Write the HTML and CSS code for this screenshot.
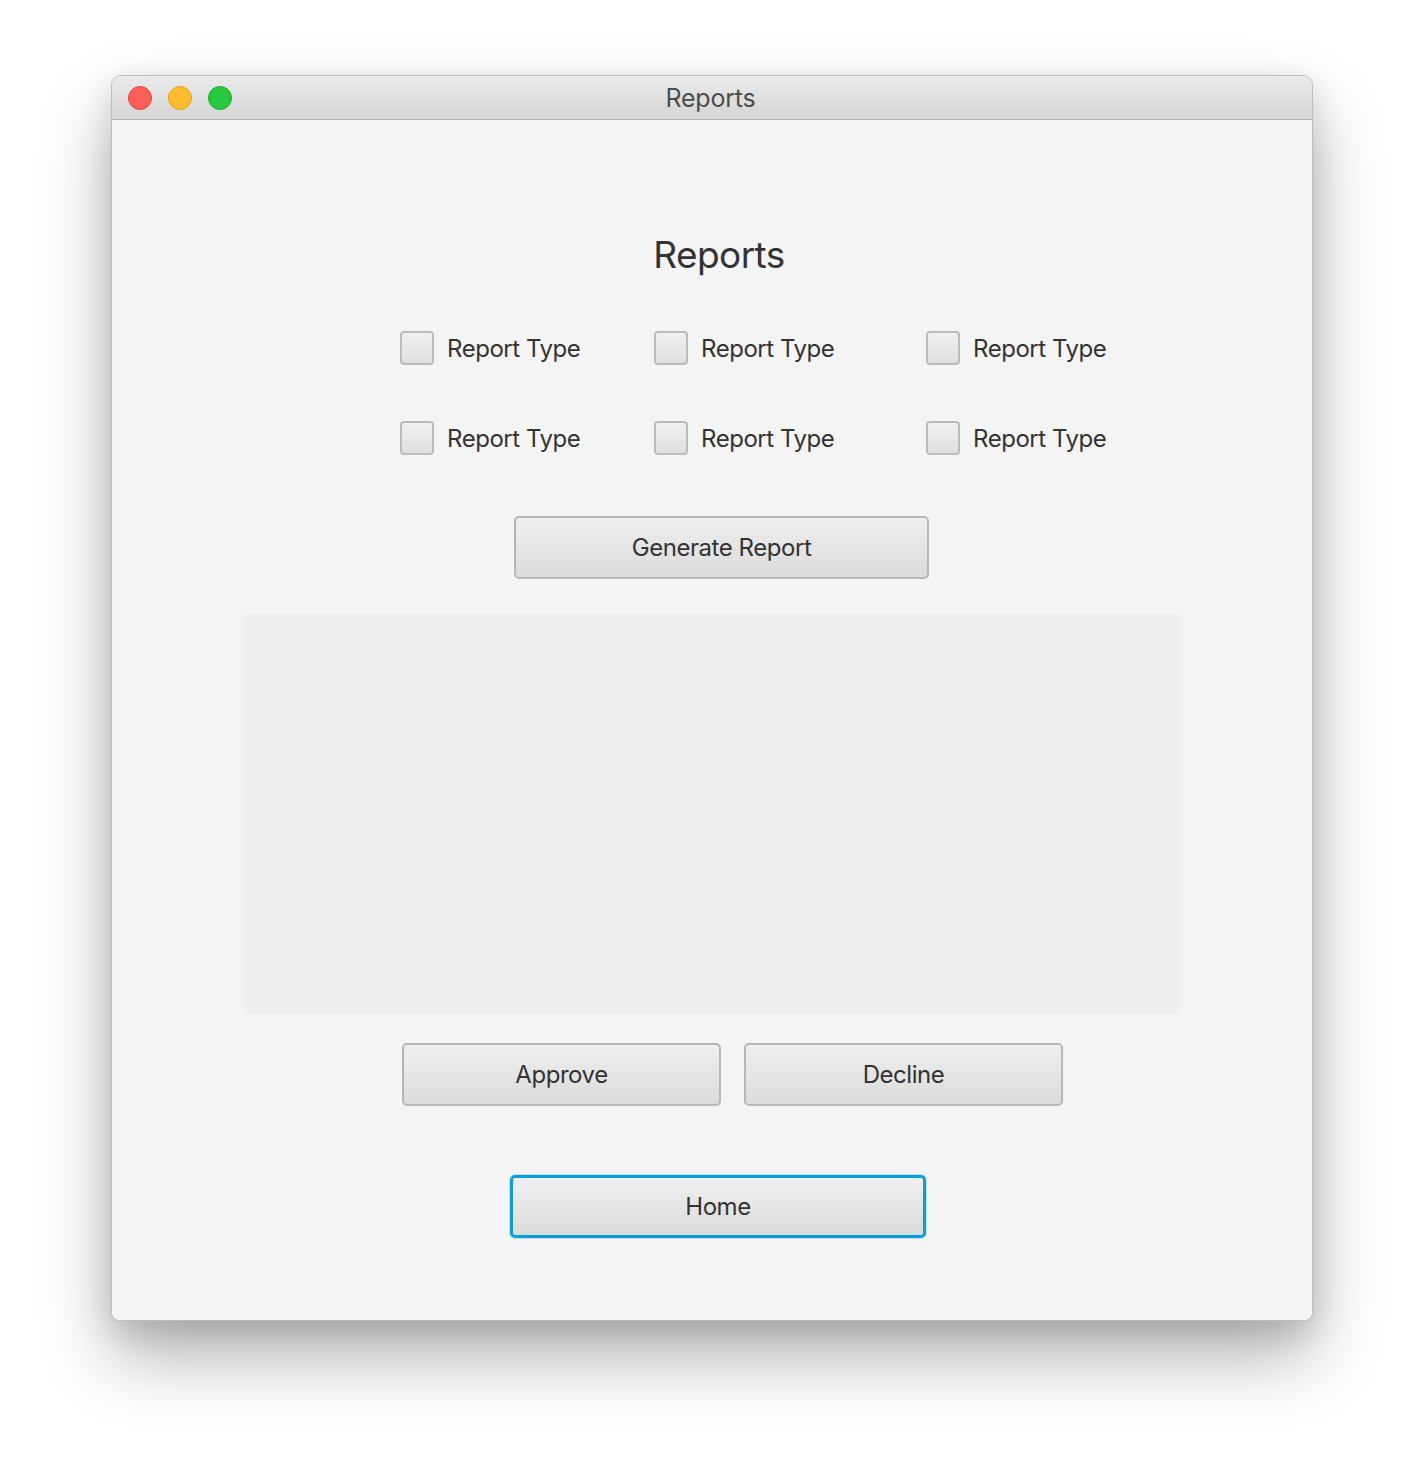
FILE: index.html
```html
<!DOCTYPE html>
<html>
<head>
<meta charset="utf-8">
<link rel="stylesheet" href="styles.css">
</head>
<body>
<div class="window">
  <div class="titlebar">
    <div class="lights">
      <span class="light red"></span>
      <span class="light yellow"></span>
      <span class="light green"></span>
    </div>
    <div class="title">Reports</div>
  </div>
  <div class="content">
    <h1 class="heading">Reports</h1>
    <div class="checks">
      <label class="check"><span class="box"></span><span class="lbl">Report Type</span></label>
      <label class="check"><span class="box"></span><span class="lbl">Report Type</span></label>
      <label class="check"><span class="box"></span><span class="lbl">Report Type</span></label>
      <label class="check"><span class="box"></span><span class="lbl">Report Type</span></label>
      <label class="check"><span class="box"></span><span class="lbl">Report Type</span></label>
      <label class="check"><span class="box"></span><span class="lbl">Report Type</span></label>
    </div>
    <button class="btn btn-generate">Generate Report</button>
    <div class="report-area"></div>
    <div class="actions">
      <button class="btn btn-action">Approve</button>
      <button class="btn btn-action">Decline</button>
    </div>
    <button class="btn btn-home">Home</button>
  </div>
</div>
</body>
</html>
```

FILE: styles.css
```css
html, body {
  margin: 0;
  padding: 0;
  background: #ffffff;
}
body {
  width: 1424px;
  height: 1468px;
  overflow: hidden;
  font-family: Inter, "Liberation Sans", sans-serif;
  color: #333333;
}
.window {
  box-sizing: border-box;
  margin-left: 111px;
  margin-top: 75px;
  width: 1202px;
  height: 1246px;
  border: 1px solid #bdbdbd;
  border-radius: 10px 10px 8px 8px;
  background: #f4f4f4;
  overflow: hidden;
  box-shadow: 0 36px 70px rgba(0,0,0,0.30), 0 10px 30px rgba(0,0,0,0.12);
  display: flex;
  flex-direction: column;
}
.titlebar {
  position: relative;
  height: 43px;
  border-bottom: 1px solid #b4b4b4;
  background: linear-gradient(#ebebeb, #d5d5d5);
  display: flex;
  align-items: center;
  justify-content: center;
}
.lights {
  position: absolute;
  left: 16px;
  top: 10px;
  display: flex;
  gap: 16px;
}
.light {
  box-sizing: border-box;
  width: 24px;
  height: 24px;
  border-radius: 50%;
}
.red { background: #fe5f57; border: 1px solid #e2463f; }
.yellow { background: #febc2e; border: 1px solid #e1a116; }
.green { background: #28c840; border: 1px solid #14ae29; }
.title {
  font-size: 25px;
  color: #4d4d4d;
  margin-left: -3px;
  letter-spacing: -0.2px;
}
.content {
  flex: 1;
  display: flex;
  flex-direction: column;
  align-items: flex-start;
}
.heading {
  margin: 110px 0 0 0;
  align-self: stretch;
  text-align: center;
  padding-left: 14px;
  font-weight: 400;
  font-size: 37px;
  line-height: 50px;
  color: #333333;
  letter-spacing: -0.6px;
}
.checks {
  margin: 51px 0 0 288px;
  display: grid;
  grid-template-columns: 254px 272px auto;
  row-gap: 56px;
}
.check {
  display: flex;
  align-items: center;
  height: 34px;
}
.box {
  box-sizing: border-box;
  width: 34px;
  height: 34px;
  border: 2px solid #bcbcbc;
  border-radius: 4px;
  background: linear-gradient(#f1f1f1, #dedede);
}
.lbl {
  margin-left: 13px;
  font-size: 24px;
  color: #333333;
  letter-spacing: -0.45px;
}
.btn {
  box-sizing: border-box;
  height: 63px;
  border: 2px solid #b7b7b7;
  border-radius: 5px;
  background: linear-gradient(#efefef, #dbdbdb);
  font-family: Inter, "Liberation Sans", sans-serif;
  font-size: 24px;
  color: #333333;
  letter-spacing: -0.45px;
  padding: 0;
}
.btn-generate {
  width: 415px;
  margin: 61px 0 0 402px;
}
.report-area {
  width: 936px;
  height: 400px;
  margin: 35px 0 0 132px;
  background: #eeeeee;
}
.actions {
  margin: 29px 0 0 290px;
  display: flex;
  gap: 23px;
}
.btn-action {
  width: 319px;
}
.btn-home {
  width: 416px;
  margin: 69px 0 0 398px;
  border: 3px solid #0a9fd8;
  box-shadow: 0 0 0 1px #bfe3f2;
}
```
